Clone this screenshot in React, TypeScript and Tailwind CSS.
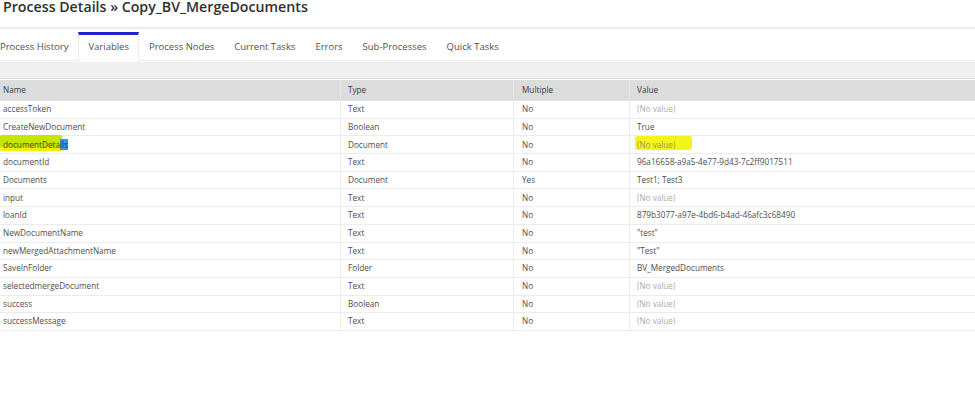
import React from "react";

type Row = {
  name: string;
  type: string;
  multiple: string;
  value: string | null;
};

const rows: Row[] = [
  { name: "accessToken", type: "Text", multiple: "No", value: null },
  { name: "CreateNewDocument", type: "Boolean", multiple: "No", value: "True" },
  { name: "documentDetails", type: "Document", multiple: "No", value: null },
  { name: "documentId", type: "Text", multiple: "No", value: "96a16658-a9a5-4e77-9d43-7c2ff9017511" },
  { name: "Documents", type: "Document", multiple: "Yes", value: "Test1; Test3" },
  { name: "input", type: "Text", multiple: "No", value: null },
  { name: "loanId", type: "Text", multiple: "No", value: "879b3077-a97e-4bd6-b4ad-46afc3c68490" },
  { name: "NewDocumentName", type: "Text", multiple: "No", value: "\"test\"" },
  { name: "newMergedAttachmentName", type: "Text", multiple: "No", value: "\"Test\"" },
  { name: "SaveInFolder", type: "Folder", multiple: "No", value: "BV_MergedDocuments" },
  { name: "selectedmergeDocument", type: "Text", multiple: "No", value: null },
  { name: "success", type: "Boolean", multiple: "No", value: null },
  { name: "successMessage", type: "Text", multiple: "No", value: null },
];

const tabs = [
  "Process History",
  "Variables",
  "Process Nodes",
  "Current Tasks",
  "Errors",
  "Sub-Processes",
  "Quick Tasks",
];

const NameCell: React.FC<{ name: string }> = ({ name }) => {
  if (name !== "documentDetails") {
    return <span>{name}</span>;
  }
  // marker highlight + text selection on "ils"
  return (
    <span className="relative inline-block">
      <span className="absolute -left-[3px] top-[-4px] h-[14px] w-[62px] rounded-[2px] bg-[#c4e600]" />
      <span className="absolute -left-[3px] top-[8px] h-[4px] w-[64px] rounded-full bg-[#f2f200]" />
      <span className="relative text-[#4a4a10]">documentDeta</span>
      <span className="relative bg-[#3d8fe8] text-[#203a60]">ils</span>
    </span>
  );
};

const ValueCell: React.FC<{ value: string | null; highlight: boolean }> = ({ value, highlight }) => {
  if (value === null) {
    if (highlight) {
      return (
        <span className="relative inline-block">
          <span className="absolute -left-[2px] top-[-3px] h-[14px] w-[57px] rounded-[3px] bg-[#f3f51a]" />
          <span className="relative text-[#9a9a50]">(No value)</span>
        </span>
      );
    }
    return <span className="text-[#ababab]">(No value)</span>;
  }
  return <span>{value}</span>;
};

export default function App() {
  return (
    <div
      className="h-[402px] w-[975px] overflow-hidden bg-white text-[#4d4d4d]"
      style={{ fontFamily: '"Open Sans", "Noto Sans", sans-serif' }}
    >
      {/* title */}
      <div className="flex h-[29px] items-start border-b-[2px] border-[#ececec] pl-[3px]">
        <h1 className="-mt-[2px] text-[14.2px] leading-[18px] font-semibold text-[#303030]">
          Process Details » Copy_BV_MergeDocuments
        </h1>
      </div>

      {/* tabs */}
      <div className="mt-[3px] flex h-[29px] border-b border-[#ececec]">
        {tabs.map((t, i) => {
          const active = t === "Variables";
          return (
            <div
              key={t}
              className={
                active
                  ? "-mb-px flex h-[29px] items-center border-t-[3px] border-x border-x-[#ececec] border-t-[#2323d6] bg-white px-[9px] pb-[2px] text-[9.5px] text-[#505050]"
                  : i === 0
                  ? "flex h-[29px] items-center pr-[10px] pt-[3px] pb-[2px] text-[9.5px] text-[#505050]"
                  : "flex h-[29px] items-center px-[10px] pt-[3px] pb-[2px] text-[9.5px] text-[#505050]"
              }
            >
              {t}
            </div>
          );
        })}
      </div>

      {/* toolbar band */}
      <div className="mt-[1px] h-[17px] border-b border-[#dedede] bg-[#efefef]" />

      {/* table */}
      <div className="mt-[1px] text-[8.2px]">
        <div className="flex h-[21px] border-b border-[#e4e4e4] bg-[#dcdcdc] text-[#3a3a3a]">
          <div className="flex w-[341px] items-center border-r border-[#e6e6e6] pl-[3px]">Name</div>
          <div className="flex w-[173px] items-center border-r border-[#e6e6e6] pl-[7px]">Type</div>
          <div className="flex w-[116px] items-center border-r border-[#e6e6e6] pl-[8px]">Multiple</div>
          <div className="flex flex-1 items-center pl-[7px]">Value</div>
        </div>
        {rows.map((r) => {
          const hl = r.name === "documentDetails";
          return (
            <div key={r.name} className="flex h-[17.7px] border-b border-[#ececec]">
              <div className="flex w-[341px] items-center border-r border-[#ececec] pl-[3px]">
                <NameCell name={r.name} />
              </div>
              <div className="flex w-[173px] items-center border-r border-[#ececec] pl-[7px]">{r.type}</div>
              <div className="flex w-[116px] items-center border-r border-[#ececec] pl-[8px]">{r.multiple}</div>
              <div className="flex flex-1 items-center pl-[7px]">
                <ValueCell value={r.value} highlight={hl} />
              </div>
            </div>
          );
        })}
      </div>
    </div>
  );
}
